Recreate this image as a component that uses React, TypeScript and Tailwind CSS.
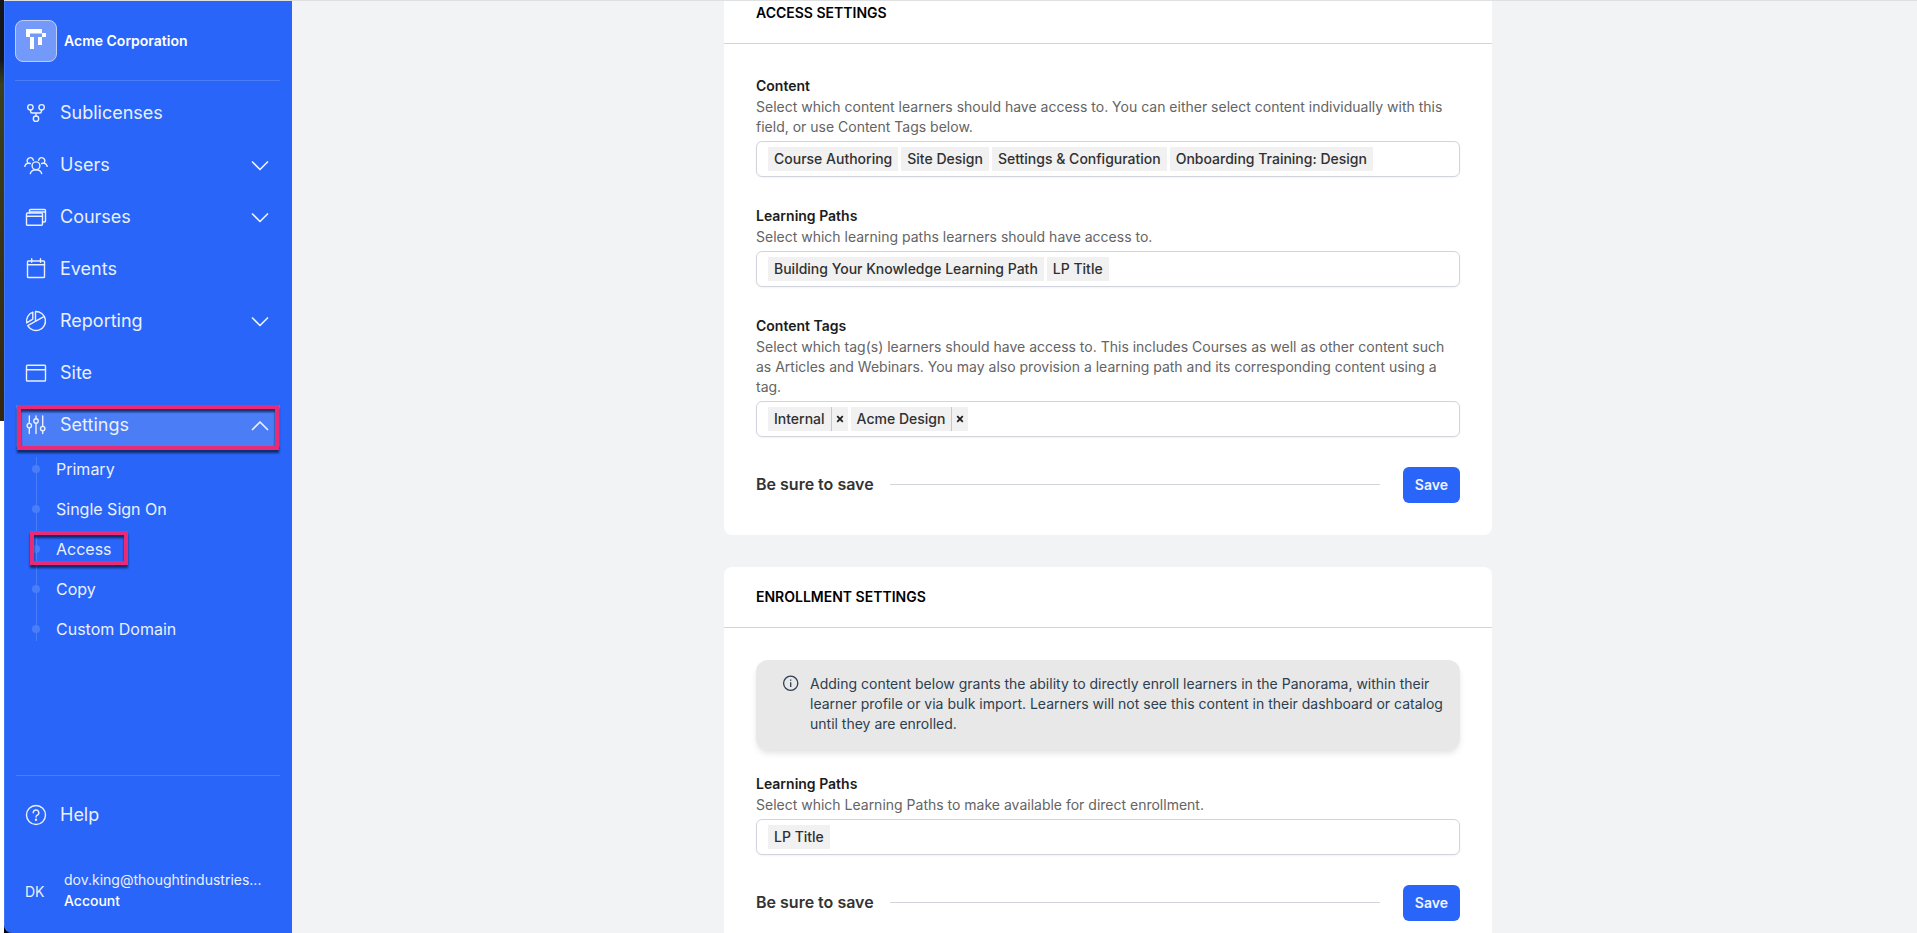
import type { ReactNode } from "react";

type NavItem = {
  label: string;
  icon: ReactNode;
  expandable?: boolean;
};

type FieldProps = {
  id: string;
  label: string;
  description: string;
  tags: string[];
  removable?: boolean;
};

function Icon({ children }: { children: ReactNode }) {
  return (
    <svg
      viewBox="0 0 24 24"
      className="size-6 shrink-0"
      fill="none"
      stroke="currentColor"
      strokeWidth="1.4"
      strokeLinecap="round"
      strokeLinejoin="round"
      aria-hidden="true"
    >
      {children}
    </svg>
  );
}

function Chevron({ up = false }: { up?: boolean }) {
  return (
    <svg
      viewBox="0 0 24 24"
      className="ml-auto size-6 shrink-0"
      fill="none"
      stroke="currentColor"
      strokeWidth="1.7"
      strokeLinecap="round"
      strokeLinejoin="round"
      aria-hidden="true"
    >
      <path d={up ? "M4.5 16.5 12 9l7.5 7.5" : "M4.5 9 12 16.5 19.5 9"} />
    </svg>
  );
}

const navItems: NavItem[] = [
  {
    label: "Sublicenses",
    icon: (
      <Icon>
        <circle cx="6.4" cy="6.3" r="2.7" />
        <circle cx="17.6" cy="6.3" r="2.7" />
        <circle cx="12" cy="17.7" r="2.7" />
        <path d="M6.6 9v1.5a1.5 1.5 0 0 0 1.5 1.5h7.8a1.5 1.5 0 0 0 1.5-1.5V9M12 12v3" />
      </Icon>
    ),
  },
  {
    label: "Users",
    expandable: true,
    icon: (
      <Icon>
        <circle cx="12" cy="12.8" r="3.9" />
        <path d="M6.3 20.5c.8-2.4 2.8-3.8 5.7-3.8s4.900 1.400 5.700 3.800" />
        <path d="M9.300 7.200A3.100 3.100 0 1 0 4 9.900M.8 13.300c.5-1.800 1.700-2.900 3.300-3.300l2.200.5" />
        <path d="M14.700 7.200A3.100 3.100 0 1 1 20 9.900M23.200 13.300c-.5-1.800-1.700-2.900-3.300-3.300l-2.200.5" />
      </Icon>
    ),
  },
  {
    label: "Courses",
    expandable: true,
    icon: (
      <Icon>
        <rect x="2.500" y="8" width="16" height="12.300" rx="1" />
        <path d="M2.500 11.200h16M5.500 8V5.500a1 1 0 0 1 1-1h14a1 1 0 0 1 1 1V16a1 1 0 0 1-1 1h-2M6 7h15" />
      </Icon>
    ),
  },
  {
    label: "Events",
    icon: (
      <Icon>
        <rect x="3.500" y="4" width="17" height="16.500" rx="0.800" />
        <path d="M3.500 7.800h17M7.700 1.800v3.500M16.500 1.800v3.500" />
      </Icon>
    ),
  },
  {
    label: "Reporting",
    expandable: true,
    icon: (
      <Icon>
        <path d="M11.500 2.500a9.500 9.500 0 1 1-7.800 14.200L20.300 7.300M11.500 2.500v9.400" />
        <path d="M8.800 3.200v7l-6.100 3.700A9.600 9.600 0 0 1 8.800 3.200Z" />
      </Icon>
    ),
  },
  {
    label: "Site",
    icon: (
      <Icon>
        <rect x="2.500" y="4.300" width="19" height="15.700" rx="0.800" />
        <path d="M2.500 8.700h19" />
      </Icon>
    ),
  },
];

const settingsPages = ["Primary", "Single Sign On", "Access", "Copy", "Custom Domain"];

function Logo() {
  return (
    <span className="flex size-[42px] items-center justify-center rounded-lg border border-[#bfcdf5] bg-[#7399fa]">
      <svg viewBox="0 0 40 40" className="size-10" fill="white" aria-hidden="true">
        <path d="M10 8h16v4h4v4h-4v8h-4v-8h4v-3.500H14V16h4v12h-4V16h-4z" />
      </svg>
    </span>
  );
}

// Callout frame around a highlighted menu entry
function Highlight({ className }: { className: string }) {
  return (
    <span
      className={`pointer-events-none absolute border-4 border-[#e92a76] drop-shadow-[0_3px_1px_rgba(10,20,60,0.75)] ${className}`}
    />
  );
}

function Sidebar() {
  return (
    <aside className="flex w-72 shrink-0 flex-col rounded-bl-lg border-l border-[#4377f8] bg-[#2865f8] pr-3 pl-[11px] text-[#eaf0ff]">
      <a
        href="#"
        className="-ml-px flex h-20 items-center gap-[7px] border-b border-[#4a7df8] pt-px text-sm font-semibold text-white"
      >
        <Logo />
        Acme Corporation
      </a>

      <nav className="mt-3">
        <ul className="flex flex-col gap-3">
          {navItems.map((item) => (
            <li key={item.label}>
              <a href="#" className="flex h-10 items-center gap-3 px-2 text-lg">
                {item.icon}
                {item.label}
                {item.expandable && <Chevron />}
              </a>
            </li>
          ))}
          <li>
            <div className="relative">
              <button className="flex h-10 w-full items-center gap-3 bg-[#4a7df6] px-2 text-lg shadow-[0_2px_0_#4a7df6]">
                <Icon>
                  <path d="M5.300 3v7.300M5.300 15v5.500M12 3v2.600M12 10.300v10.200M18.700 3v10.300M18.700 18v2.500" />
                  <circle cx="5.300" cy="12.600" r="2.200" />
                  <circle cx="12" cy="8" r="2.200" />
                  <circle cx="18.700" cy="15.600" r="2.200" />
                </Icon>
                Settings
                <Chevron up />
              </button>
              <Highlight className="inset-x-px top-0 -bottom-[5px]" />
            </div>
            <ul className="relative mt-1 before:absolute before:inset-y-2 before:left-5 before:w-px before:bg-[#4a7df8]">
              {settingsPages.map((page) => (
                <li key={page} className="relative">
                  <a href="#" className="flex h-10 items-center gap-4 pl-4">
                    <span className="size-2 rounded-full bg-[#4a7df8]" />
                    {page}
                  </a>
                  {page === "Access" && <Highlight className="top-0.5 bottom-1 left-3.5 w-[98px]" />}
                </li>
              ))}
            </ul>
          </li>
        </ul>
      </nav>

      <div className="mt-auto border-t border-[#4a7df8] pt-[19px] pb-[22px]">
        <a href="#" className="flex h-10 items-center gap-3 px-2 text-lg">
          <Icon>
            <circle cx="12" cy="12" r="9.500" />
            <path d="M9.200 9.800a2.800 2.800 0 1 1 4.200 2.400c-.9.500-1.400.9-1.400 1.800" />
            <circle cx="12" cy="16.800" r="0.500" fill="currentColor" />
          </Icon>
          Help
        </a>
        <div className="mt-[34px] flex items-center pl-[9px] text-sm leading-[21px]">
          <span className="w-[39px] pt-0.5">DK</span>
          <div className="min-w-0">
            <p>dov.king@thoughtindustries...</p>
            <a href="#" className="font-medium text-white">
              Account
            </a>
          </div>
        </div>
      </div>
    </aside>
  );
}

function TagField({ id, label, description, tags, removable = false }: FieldProps) {
  return (
    <div>
      <label htmlFor={id} className="mb-px block text-sm font-semibold text-[#1c1c1c]">
        {label}
      </label>
      <p id={`${id}-hint`} className="text-sm text-[#646464]">
        {description}
      </p>
      <div className="mt-1 flex h-9 items-center gap-[3px] rounded-md border border-[#d1d3dd] px-[11px] shadow-xs">
        {tags.map((tag) => (
          <span key={tag} className="flex h-6 shrink-0 items-center bg-[#f1f1f1] text-sm font-medium text-[#303030]">
            <span className="px-1.5">{tag}</span>
            {removable && (
              <button
                aria-label={`Remove ${tag}`}
                className="flex h-6 w-[17px] items-center justify-center border-l border-[#c8c8c8]"
              >
                <svg viewBox="0 0 8 8" className="size-2" stroke="#222" strokeWidth="1.800" aria-hidden="true">
                  <path d="m1.200 1.200 5.600 5.600M6.800 1.200 1.200 6.800" />
                </svg>
              </button>
            )}
          </span>
        ))}
        <input id={id} type="text" aria-describedby={`${id}-hint`} className="min-w-0 flex-1 text-sm outline-none" />
      </div>
    </div>
  );
}

function SaveRow() {
  return (
    <div className="mt-[30px] flex items-center gap-[23px]">
      <div className="flex flex-1 items-center gap-4 pb-0.5">
        <p className="font-semibold text-[#333]">Be sure to save</p>
        <hr className="flex-1 border-[#d1d3dd]" />
      </div>
      <button className="h-9 rounded-md bg-[#2865f8] px-3 text-sm font-semibold text-[#eef3ff]">Save</button>
    </div>
  );
}

function Card({ title, children }: { title: string; children: ReactNode }) {
  return (
    <section className="rounded-lg bg-white">
      <h2 className="flex h-[61px] items-center border-b border-[#d1d3dd] px-8 text-sm font-semibold text-black uppercase">
        {title}
      </h2>
      <div className="p-8">{children}</div>
    </section>
  );
}

export default function App() {
  return (
    <div className="flex h-screen overflow-hidden font-[Inter,sans-serif]">
      {/* sliver of the window behind */}
      <div className="flex w-1 shrink-0 flex-col bg-white">
        <div className="h-[421px] bg-linear-to-b from-[#15161c] from-14% via-[#3a401a] via-20% to-[#33260f]" />
      </div>

      <div className="flex min-w-0 flex-1 border-t border-[#dfe0e1] bg-black">
        <Sidebar />

        <main className="min-w-0 flex-1 overflow-hidden bg-[#f1f3f5] pl-[7px]">
          {/* page is scrolled so the first card starts above the fold */}
          <div className="mx-auto -mt-[18px] flex max-w-3xl flex-col gap-8">
            <Card title="Access Settings">
              <div className="flex flex-col gap-[29px]">
                <TagField
                  id="content"
                  label="Content"
                  description="Select which content learners should have access to. You can either select content individually with this field, or use Content Tags below."
                  tags={["Course Authoring", "Site Design", "Settings & Configuration", "Onboarding Training: Design"]}
                />
                <TagField
                  id="learning-paths"
                  label="Learning Paths"
                  description="Select which learning paths learners should have access to."
                  tags={["Building Your Knowledge Learning Path", "LP Title"]}
                />
                <TagField
                  id="content-tags"
                  label="Content Tags"
                  description="Select which tag(s) learners should have access to. This includes Courses as well as other content such as Articles and Webinars. You may also provision a learning path and its corresponding content using a tag."
                  tags={["Internal", "Acme Design"]}
                  removable
                />
              </div>
              <SaveRow />
            </Card>

            <Card title="Enrollment Settings">
              <div className="mb-6 flex gap-2.5 rounded-xl bg-[#e8e8e8] pt-3.5 pr-4 pb-4 pl-6 text-sm text-[#2c3e4f] shadow-[0_4px_6px_-1px_rgba(0,0,0,0.12)]">
                <svg
                  viewBox="0 0 20 20"
                  className="size-5 shrink-0"
                  fill="none"
                  stroke="currentColor"
                  strokeWidth="1.300"
                  aria-hidden="true"
                >
                  <circle cx="10.700" cy="9.200" r="7.100" />
                  <path d="M10.700 8.200v4.800M10.700 5.400v1.400" />
                </svg>
                <p>
                  Adding content below grants the ability to directly enroll learners in the Panorama, within their
                  learner profile or via bulk import. Learners will not see this content in their dashboard or catalog
                  until they are enrolled.
                </p>
              </div>
              <TagField
                id="enrollment-learning-paths"
                label="Learning Paths"
                description="Select which Learning Paths to make available for direct enrollment."
                tags={["LP Title"]}
              />
              <SaveRow />
            </Card>
          </div>
        </main>
      </div>
    </div>
  );
}
